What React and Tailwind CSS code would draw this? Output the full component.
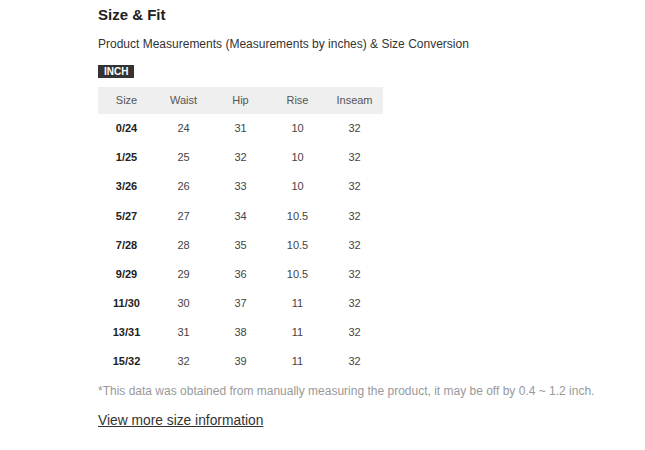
import React from 'react';

const rows = [
  ['0/24', '24', '31', '10', '32'],
  ['1/25', '25', '32', '10', '32'],
  ['3/26', '26', '33', '10', '32'],
  ['5/27', '27', '34', '10.5', '32'],
  ['7/28', '28', '35', '10.5', '32'],
  ['9/29', '29', '36', '10.5', '32'],
  ['11/30', '30', '37', '11', '32'],
  ['13/31', '31', '38', '11', '32'],
  ['15/32', '32', '39', '11', '32'],
];

const headers = ['Size', 'Waist', 'Hip', 'Rise', 'Inseam'];

export default function App() {
  return (
    <div className="w-[645px] h-[450px] bg-white pl-[98px] pt-[5px] text-[#333]" style={{ fontFamily: '"Liberation Sans", Arial, sans-serif' }}>
      <h2 className="text-[15px] font-bold leading-[20px] text-[#222]">Size &amp; Fit</h2>
      <p className="mt-[11px] text-[12px] leading-[16px] text-[#333]">
        Product Measurements (Measurements by inches) &amp; Size Conversion
      </p>
      <div className="mt-[13px] w-fit bg-[#333] px-[6px] text-[10px] font-bold leading-[13px] text-white">INCH</div>
      <table className="mt-[9px] w-[285px] border-collapse text-[11px]">
        <thead>
          <tr className="bg-[#efefef] h-[27px]">
            {headers.map((h) => (
              <th key={h} className="w-[57px] text-center font-normal text-[#555]">{h}</th>
            ))}
          </tr>
        </thead>
        <tbody>
          {rows.map((r) => (
            <tr key={r[0]} className="h-[29.1px]">
              {r.map((c, i) => (
                <td key={i} className={i === 0 ? 'text-center font-bold text-[#222]' : 'text-center text-[#444]'}>{c}</td>
              ))}
            </tr>
          ))}
        </tbody>
      </table>
      <p className="mt-[7px] text-[12px] leading-[16px] text-[#999]">
        *This data was obtained from manually measuring the product, it may be off by 0.4 ~ 1.2 inch.
      </p>
      <a className="mt-[13px] block w-fit text-[13.8px] leading-[18px] text-[#333] underline">View more size information</a>
    </div>
  );
}
